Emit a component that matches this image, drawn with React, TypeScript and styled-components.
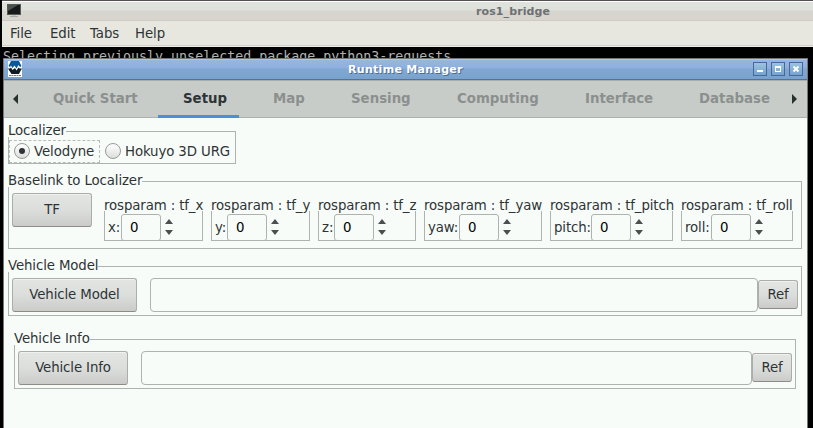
import React from 'react';
import styled, { createGlobalStyle } from 'styled-components';

const Global = createGlobalStyle`
  * { box-sizing: border-box; }
  body { margin: 0; background: #000; overflow: hidden; }
`;

const Desktop = styled.div`
  width: 813px;
  height: 428px;
  overflow: hidden;
  background: #000;
  font: 13.33px/16px "DejaVu Sans", sans-serif;
  letter-spacing: -0.12px;
  color: #2e3436;
  white-space: nowrap;
`;

const Terminal = styled.div`
  margin-left: 2px;
`;

const TerminalTitle = styled.div`
  height: 21px;
  border-top: 1px solid #555052;
  border-bottom: 1px solid #cfcac6;
  box-shadow: inset 0 1px #fff;
  background: linear-gradient(#e0e4de 0, #dde1da 9px, #d7d5cf 10px, #d8d4ce 100%);
  display: flex;
  align-items: center;
  padding: 1px 0 0 5px;
`;

const TerminalName = styled.div`
  margin-left: 455px;
  padding-top: 2px;
  font-size: 11px;
  font-weight: bold;
  letter-spacing: 0.1px;
  color: #6d7174;
`;

const MenuBar = styled.div`
  height: 26px;
  display: grid;
  grid-template-columns: 40px 40px 45px 40px;
  padding: 5px 0 0 8px;
  background: #e8e7df;
  border-bottom: 1px solid #efeee8;
  box-shadow: inset 0 -1px #d1cfc8;
`;

const MenuItem = styled.span`
  letter-spacing: -0.1px;
`;

const Output = styled.div`
  height: 11px;
  overflow: hidden;
  padding: 2px 0 0 1px;
  background: #000;
  color: #b2b2b2;
  font: 13.3px/16px "DejaVu Sans Mono", monospace;
  letter-spacing: 0;
`;

const Manager = styled.div`
  width: 805px;
  height: 370px;
  margin-left: 3px;
  border: solid #777;
  border-width: 1px 1px 0 1px;
  background: #f8fcf9;
`;

const ManagerTitle = styled.div`
  height: 21px;
  display: flex;
  align-items: center;
  padding: 0 4px 0 4px;
  background: linear-gradient(#98b8e1 0, #8eaede 9px, #80a7d3 10px, #78a2cb 100%);
  border-bottom: 1px solid #4f74a3;
  box-shadow: inset 0 1px #a9c7ec;
`;

const ManagerName = styled.div`
  flex: 1;
  padding: 1px 0 0 326px;
  font-size: 11px;
  letter-spacing: 0.3px;
  font-weight: bold;
  color: #fff;
  text-shadow: 1px 1px #4a6c96;
`;

const WindowButtons = styled.div`
  display: flex;
  gap: 4px;
`;

const WindowButton = styled.div`
  width: 14px;
  height: 14px;
  border: 1px solid #49689a;
  background: linear-gradient(#9cc3dc, #76a2d1);
  svg { display: block; }
`;

const TabBar = styled.div`
  height: 38px;
  display: flex;
  padding-left: 8px;
  background: #c8ccc8;
  border-top: 1px solid #a9aeab;
  border-bottom: 1px solid #acb1ae;
  letter-spacing: 0;
  font-weight: bold;
`;

const Arrow = styled.svg`
  display: block;
  flex: none;
  width: 16px;
  height: 36px;
`;

const Tab = styled.div<{ $w: number; $on?: boolean }>`
  flex: none;
  width: ${p => p.$w}px;
  height: 37px;
  padding: 10px 0 0 25px;
  color: ${p => (p.$on ? '#2e3436' : '#8b908f')};
  background: ${p => (p.$on ? 'linear-gradient(#4a90d9, #4a90d9) 0 100% / 81px 3px no-repeat' : 'none')};
`;

const Page = styled.div`
  padding: 13px 0 0 4px;
`;

const Group = styled.div<{ $w: number; $h: number; $top?: number; $left?: number }>`
  flex: none;
  width: ${p => p.$w}px;
  height: ${p => p.$h}px;
  margin: ${p => p.$top ?? 0}px 0 0 ${p => p.$left ?? 0}px;
  border: 1px solid #afb3b0;
`;

const Legend = styled.div<{ $full?: boolean }>`
  width: ${p => (p.$full ? 'calc(100% + 2px)' : 'fit-content')};
  height: 16px;
  margin: -11px 0 0 -1px;
  background: #f8fcf9;
  line-height: ${p => (p.$full ? 21 : 19)}px;
`;

const RadioRow = styled.div`
  display: flex;
  margin-top: 3px;
`;

const Radio = styled.div<{ $w: number; $focus?: boolean }>`
  width: ${p => p.$w}px;
  height: 23px;
  display: flex;
  align-items: flex-start;
  gap: 4px;
  padding: 2px 0 0 4px;
  border: 1px dashed ${p => (p.$focus ? '#b9bdba' : 'transparent')};
`;

const RadioText = styled.span`
  padding-top: 1px;
`;

const Dial = styled.span`
  width: 16px;
  height: 16px;
  display: grid;
  place-items: center;
  border: 1px solid #979a98;
  border-radius: 50%;
  background: linear-gradient(#fff, #dcdedc);
`;

const Dot = styled.span`
  width: 6px;
  height: 6px;
  border-radius: 50%;
  background: #2e3436;
`;

const Row = styled.div`
  display: flex;
  align-items: flex-start;
  padding: 6px 0 0 3px;
`;

const Button = styled.div<{ $w: number; $h: number; $mt?: number }>`
  flex: none;
  width: ${p => p.$w}px;
  height: ${p => p.$h}px;
  margin-top: ${p => p.$mt ?? 0}px;
  display: flex;
  align-items: center;
  justify-content: center;
  border: 1px solid #aaadaa;
  border-bottom-color: #8d8b85;
  border-radius: 3px;
  background: linear-gradient(#e3e5e3, #dcdedc 50%, #cbccca);
  box-shadow: inset 0 1px #f0f2f0;
`;

const Params = styled.div`
  display: flex;
  gap: 8px;
  margin: 12px 0 0 12px;
`;

const Spin = styled.div`
  display: flex;
  padding: 3px 0 0 3px;
`;

const SpinLabel = styled.div<{ $w: number }>`
  width: ${p => p.$w}px;
  padding-top: 6px;
`;

const Entry = styled.div`
  width: 40px;
  height: 27px;
  padding: 5px 0 0 8px;
  border: 1px solid #afb3b0;
  border-radius: 3px;
  color: #000;
`;

const Steps = styled.svg`
  display: block;
  margin: 4px 0 0 4px;
  fill: #4b4f50;
`;

const Field = styled.div<{ $w: number }>`
  flex: none;
  width: ${p => p.$w}px;
  height: 34px;
  margin-left: 13px;
  border: 1px solid #afb3b0;
  border-radius: 4px;
`;

const params = [
  { name: 'tf_x', label: 'x:', width: 99, labelWidth: 13 },
  { name: 'tf_y', label: 'y:', width: 99, labelWidth: 12 },
  { name: 'tf_z', label: 'z:', width: 98, labelWidth: 12 },
  { name: 'tf_yaw', label: 'yaw:', width: 118, labelWidth: 31 },
  { name: 'tf_pitch', label: 'pitch:', width: 123, labelWidth: 37 },
  { name: 'tf_roll', label: 'roll:', width: 112, labelWidth: 26 },
];

const tabs = [
  { name: 'Quick Start', width: 130 },
  { name: 'Setup', width: 90, on: true },
  { name: 'Map', width: 78 },
  { name: 'Sensing', width: 106 },
  { name: 'Computing', width: 128 },
  { name: 'Interface', width: 114 },
  { name: 'Database', width: 109 },
];

const MonitorIcon = () => (
  <svg width="14" height="14" viewBox="0 0 14 14">
    <rect x="0.5" y="0.5" width="13" height="10" fill="#171a19" stroke="#555a56" />
    <path d="M1 1h10L1 7z" fill="#4b514e" />
    <path d="M5 11h4v1H5z" fill="#c3c5c1" />
    <path d="M3 12h8v1H3z" fill="#a5a8a4" />
  </svg>
);

const ManagerIcon = () => (
  <svg width="14" height="16" viewBox="0 0 14 16">
    <path d="M0 0h14v16H0z" fill="#fff" />
    <path d="M0.500 5L3 0h8L13.500 5 12 6 10.500 4 8.500 7.500 6.500 4.500 4.500 7 3 4.500 2 6z" fill="#0b579b" />
    <path d="M0 7.500h2l1-1 1.500 2.500L7 7 8.500 9.500 10.500 6.500l1 1H14L12.500 10 11 13H3.500L1.500 10z" fill="#101c24" />
    <path d="M1 14.500h12" stroke="#777" strokeDasharray="2 .5" />
  </svg>
);

export default function App() {
  return (
    <Desktop>
      <Global />
      <Terminal>
        <TerminalTitle>
          <MonitorIcon />
          <TerminalName>ros1_bridge</TerminalName>
        </TerminalTitle>
        <MenuBar>
          <MenuItem>File</MenuItem>
          <MenuItem>Edit</MenuItem>
          <MenuItem>Tabs</MenuItem>
          <MenuItem>Help</MenuItem>
        </MenuBar>
        <Output>Selecting previously unselected package python3-requests.</Output>
      </Terminal>
      <Manager>
        <ManagerTitle>
          <ManagerIcon />
          <ManagerName>Runtime Manager</ManagerName>
          <WindowButtons>
            <WindowButton>
              <svg width="12" height="12"><path d="M3 7h6v2H3z" fill="#fff" /></svg>
            </WindowButton>
            <WindowButton>
              <svg width="12" height="12"><path d="M3 3h6v6H3zM4 5v3h4V5z" fill="#fff" fillRule="evenodd" /></svg>
            </WindowButton>
            <WindowButton>
              <svg width="12" height="12"><path d="M3.5 3.5l5 5m0-5l-5 5" stroke="#fff" strokeWidth="2" /></svg>
            </WindowButton>
          </WindowButtons>
        </ManagerTitle>
        <TabBar>
          <Arrow><path d="M6 13v10l-5-5z" fill="#26302d" /></Arrow>
          {tabs.map(t => <Tab key={t.name} $w={t.width} $on={t.on}>{t.name}</Tab>)}
          <Arrow><path d="M9 13v10l5-5z" fill="#26302d" /></Arrow>
        </TabBar>
        <Page>
          <Group $w={228} $h={33}>
            <Legend>Localizer</Legend>
            <RadioRow>
              <Radio $w={91} $focus><Dial><Dot /></Dial><RadioText>Velodyne</RadioText></Radio>
              <Radio $w={133}><Dial /><RadioText>Hokuyo 3D URG</RadioText></Radio>
            </RadioRow>
          </Group>
          <Group $w={794} $h={68} $top={17}>
            <Legend>Baselink to Localizer</Legend>
            <Row>
              <Button $w={80} $h={34}>TF</Button>
              <Params>
                {params.map(p => (
                  <Group key={p.name} $w={p.width} $h={36}>
                    <Legend $full>rosparam : {p.name}</Legend>
                    <Spin>
                      <SpinLabel $w={p.labelWidth}>{p.label}</SpinLabel>
                      <Entry>0</Entry>
                      <Steps width="8" height="18"><path d="M0 6l4-5 4 5zM0 12h8l-4 5z" /></Steps>
                    </Spin>
                  </Group>
                ))}
              </Params>
            </Row>
          </Group>
          <Group $w={794} $h={50} $top={17}>
            <Legend>Vehicle Model</Legend>
            <Row>
              <Button $w={125} $h={34}>Vehicle Model</Button>
              <Field $w={608} />
              <Button $w={40} $h={29} $mt={2}>Ref</Button>
            </Row>
          </Group>
          <Group $w={782} $h={50} $top={23} $left={6}>
            <Legend>Vehicle Info</Legend>
            <Row>
              <Button $w={110} $h={34}>Vehicle Info</Button>
              <Field $w={611} />
              <Button $w={40} $h={29} $mt={2}>Ref</Button>
            </Row>
          </Group>
        </Page>
      </Manager>
    </Desktop>
  );
}
